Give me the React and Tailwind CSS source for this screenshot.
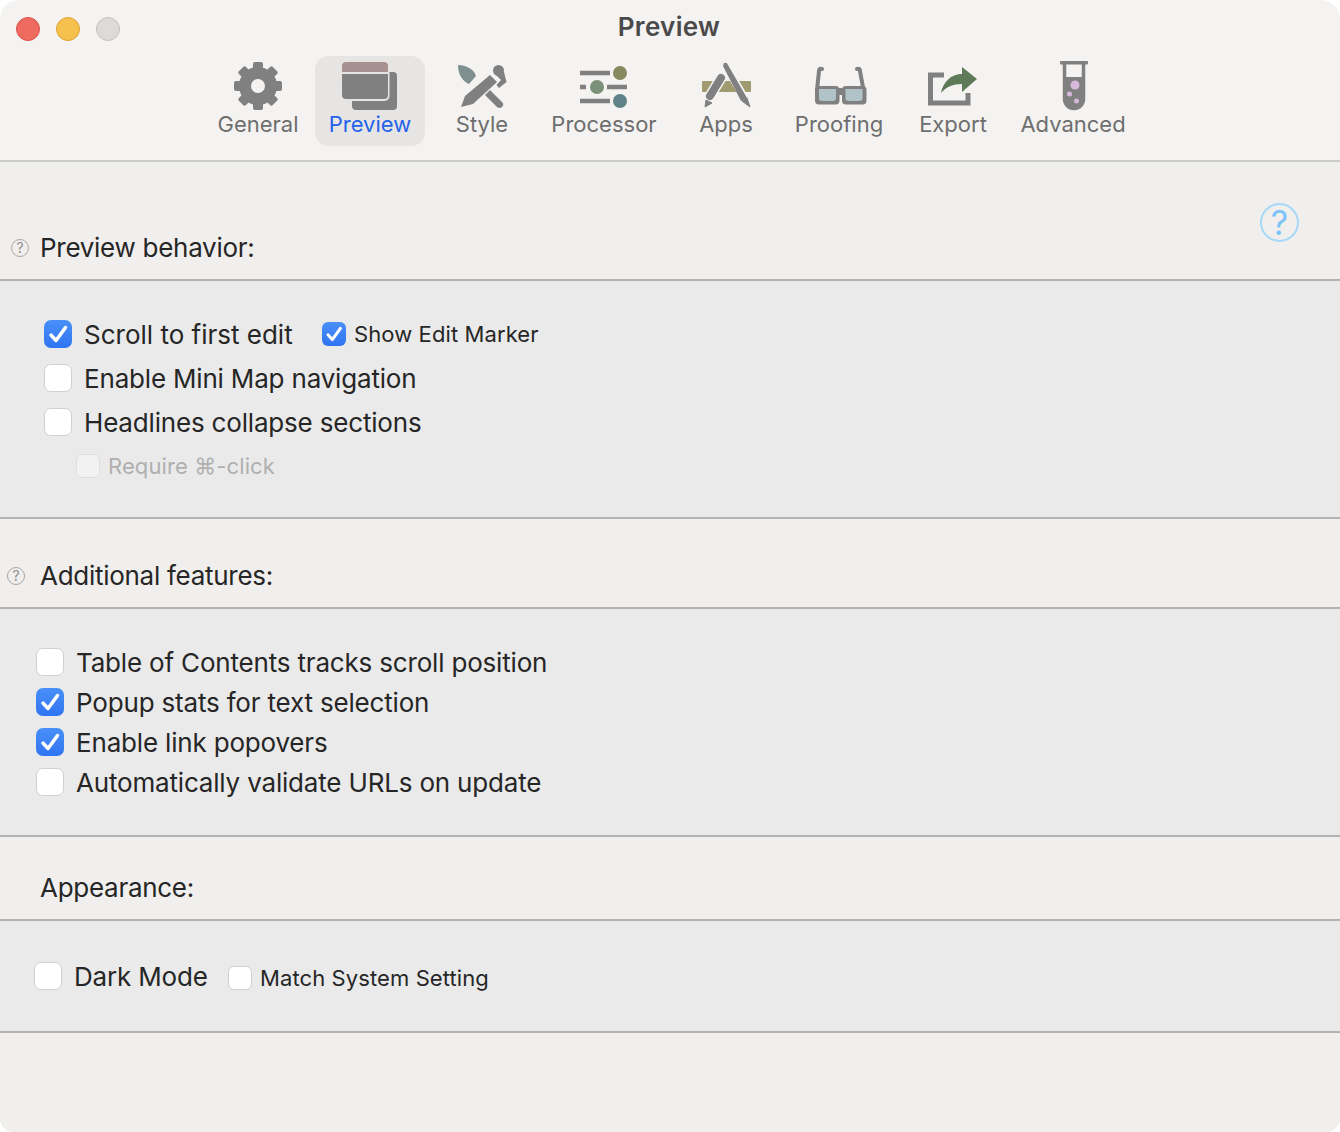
import React from 'react';

const GRAY = '#808080';
const BAR = '#f4f3f1';

const GearIcon = () => (
  <svg width="60" height="54" viewBox="228 58 60 54">
    {[0, 45, 90, 135, 180, 225, 270, 315].map((deg) => (
      <rect key={deg} x="253" y="62" width="10" height="10" rx="2" fill={GRAY} transform={`rotate(${deg} 258 86)`} />
    ))}
    <circle cx="258" cy="86" r="13" fill="none" stroke={GRAY} strokeWidth="12" />
  </svg>
);

const PreviewIcon = () => (
  <svg width="60" height="54" viewBox="340 58 60 54">
    <rect x="352" y="72" width="45" height="38" rx="4" fill={GRAY} />
    <rect x="340.5" y="60.5" width="49" height="40.5" rx="5" fill="#e6e5e3" />
    <path d="M342 72 V66 a4 4 0 0 1 4 -4 H384 a4 4 0 0 1 4 4 V72 Z" fill="#a89090" />
    <path d="M342 74 H388 V95 a4 4 0 0 1 -4 4 H346 a4 4 0 0 1 -4 -4 Z" fill={GRAY} />
  </svg>
);

const StyleIcon = () => (
  <svg width="60" height="54" viewBox="452 58 60 54">
    <path d="M458 65 C466 65 474 69 476 76 L469 84 C462 81 458 74 458 65 Z" fill="#7f8f90" />
    <path d="M485 95 L490 90 L503 103 Q504 107 500 108 Q497 108 496 106 Z" fill={GRAY} />
    <path d="M461 107 L465 96 L490 75 L497 82 L473 104 Z" fill={GRAY} />
    <circle cx="498.5" cy="70.5" r="5.5" fill={GRAY} />
    <path d="M494 70 L504 72 L506.5 82 L499 88 L496.5 85 L501 80 L497 76 Z" fill={GRAY} />
  </svg>
);

const ProcessorIcon = () => (
  <svg width="60" height="54" viewBox="574 58 60 54">
    <path d="M580 73 H610 M580 87 H586 M607 87 H627 M580 101 H610" stroke={GRAY} strokeWidth="4.5" />
    <circle cx="620" cy="73" r="7" fill="#868a60" />
    <circle cx="597" cy="87" r="7" fill="#7a9078" />
    <circle cx="620" cy="101" r="7" fill="#5f8288" />
  </svg>
);

const AppsIcon = () => (
  <svg width="60" height="54" viewBox="696 58 60 54">
    <rect x="702" y="81" width="49" height="11" rx="1" fill="#a09a6e" />
    <path d="M721 78 L710 96" stroke={BAR} strokeWidth="11" strokeLinecap="round" />
    <path d="M726 66 L745 99" stroke={BAR} strokeWidth="8" strokeLinecap="round" />
    <path d="M721 78 L710 96" stroke={GRAY} strokeWidth="8" strokeLinecap="round" />
    <path d="M705 107 L706 100 L712 103 Z" fill={GRAY} stroke={GRAY} strokeLinejoin="round" />
    <path d="M724 63 Q727 62 728 65 L747 98 L741 101 L723 66 Z" fill={GRAY} />
    <path d="M750 107 L742 101 L747 98 Z" fill={GRAY} stroke={GRAY} strokeLinejoin="round" />
  </svg>
);

const ProofingIcon = () => (
  <svg width="60" height="54" viewBox="809 58 60 54">
    <path d="M822 69 Q819 68 819 71 L817 90 M857 69 Q860 68 860 71 L863.5 90" fill="none" stroke={GRAY} strokeWidth="4" strokeLinecap="round" />
    <rect x="815" y="86" width="24.5" height="18.5" rx="4" fill={GRAY} />
    <rect x="842" y="86" width="24.5" height="18.5" rx="4" fill={GRAY} />
    <rect x="838" y="88" width="6" height="7" fill={GRAY} />
    <path d="M819 89 H836 V98 a3 3 0 0 1 -3 3 H822 a3 3 0 0 1 -3 -3 Z" fill="#afc3c9" />
    <path d="M845.5 89 H862.5 V98 a3 3 0 0 1 -3 3 H848.5 a3 3 0 0 1 -3 -3 Z" fill="#afc3c9" />
  </svg>
);

const ExportIcon = () => (
  <svg width="60" height="54" viewBox="923 58 60 54">
    <path d="M944 75 H930.5 V103 H968 V93" fill="none" stroke={GRAY} strokeWidth="5" />
    <path d="M962 67 L977 79 L962 92 V84 C953 84 946 87 941 93 C943 82 951 74 962 74 Z" fill="#5e7a58" />
  </svg>
);

const AdvancedIcon = () => (
  <svg width="60" height="54" viewBox="1043 58 60 54">
    <rect x="1060" y="61" width="28" height="3.5" rx="1" fill={GRAY} />
    <path d="M1064.5 64 V99 a9.5 9.5 0 0 0 19 0 V64" fill="none" stroke={GRAY} strokeWidth="3.5" />
    <path d="M1064.5 77 H1083.5 V99 a9.5 9.5 0 0 1 -19 0 Z" fill={GRAY} />
    <circle cx="1075" cy="85" r="4.5" fill="#d8b8dc" />
    <circle cx="1069.5" cy="94" r="2.5" fill="#d8b8dc" />
    <circle cx="1076.5" cy="101" r="2.5" fill="#d8b8dc" />
  </svg>
);

const tabs = [
  { label: 'General', width: 'w-[112px]', Icon: GearIcon },
  { label: 'Preview', width: 'w-[112px]', Icon: PreviewIcon, active: true },
  { label: 'Style', width: 'w-[112px]', Icon: StyleIcon },
  { label: 'Processor', width: 'w-[132px]', Icon: ProcessorIcon },
  { label: 'Apps', width: 'w-[112px]', Icon: AppsIcon },
  { label: 'Proofing', width: 'w-[114px]', Icon: ProofingIcon },
  { label: 'Export', width: 'w-[114px]', Icon: ExportIcon },
  { label: 'Advanced', width: 'w-[126px]', Icon: AdvancedIcon },
];

const Check = ({ checked, small, disabled }) => {
  const size = small ? 'w-6 h-6 rounded-[6px]' : 'w-7 h-7 rounded-[7px]';
  if (checked) {
    return (
      <span className={`${size} shrink-0 flex items-center justify-center bg-gradient-to-b from-[#4a90f8] to-[#2f74f2]`}>
        <svg width={small ? 24 : 28} height={small ? 24 : 28} viewBox="0 0 28 28">
          <path d="M7 15 L12 20.5 L21.5 7.5" fill="none" stroke="#fff" strokeWidth="3.5" strokeLinecap="round" strokeLinejoin="round" />
        </svg>
      </span>
    );
  }
  return (
    <span
      className={`${size} shrink-0 border ${disabled ? 'bg-[#f2f2f2] border-[#dedede]' : 'bg-white border-[#d0d0d0]'}`}
    ></span>
  );
};

const Label = ({ children }) => (
  <span className="text-[26px] tracking-[-0.18px] text-[#262626]">{children}</span>
);

const Row = ({ children, checked, height }) => (
  <div className={`flex items-center gap-3 ${height}`}>
    <Check checked={checked} />
    <Label>{children}</Label>
  </div>
);

const SmallCheck = ({ checked, children, disabled, className }) => (
  <div className={`flex items-center gap-2 ${className || ''}`}>
    <Check small checked={checked} disabled={disabled} />
    <span className={`text-[22px] tracking-[0.1px] ${disabled ? 'text-[#b0b0b0]' : 'text-[#262626]'}`}>{children}</span>
  </div>
);

const SmallHelp = () => (
  <span className="w-[18px] h-[18px] rounded-full border border-[#a8a8a8] flex items-center justify-center text-[14px] leading-none text-[#8c8c8c]">
    ?
  </span>
);

const SectionHeader = ({ title, height, help, helpLeft, bigHelp }) => (
  <div className={`flex items-end justify-between ${height} pb-[15px] border-b-2 border-[#b2b2b2] bg-[#f0efed]`}>
    <div className="flex items-center h-8">
      <div className={`w-10 flex items-center ${helpLeft}`}>{help && <SmallHelp />}</div>
      <span className="text-[26px] leading-8 tracking-[-0.28px] text-[#262626]">{title}</span>
    </div>
    {bigHelp && (
      <span className="self-start mt-[41px] mr-[41px] w-[39px] h-[39px] rounded-full border-2 border-[#a8d8f8] flex items-center justify-center text-[34px] leading-none text-[#7cc4f8]">
        ?
      </span>
    )}
  </div>
);

export default function App() {
  return (
    <div className="w-[1340px] h-[1132px] bg-white font-['Inter',sans-serif]">
      <div className="h-full flex flex-col rounded-t-[20px] rounded-b-[14px] overflow-hidden bg-[#f0efed]">
        {/* Toolbar */}
        <div className="h-[162px] shrink-0 bg-[#f4f3f1] border-b-2 border-[#cbcbc9]">
          <div className="h-14 grid grid-cols-[1fr_auto_1fr] items-center pt-[1px]">
            <div className="flex items-center gap-4 pl-4">
              <span className="w-6 h-6 rounded-full bg-[#ef6a5f] border border-[#d9534a]"></span>
              <span className="w-6 h-6 rounded-full bg-[#f6c04f] border border-[#dfa233]"></span>
              <span className="w-6 h-6 rounded-full bg-[#dcdbd9] border border-[#c2c1bf]"></span>
            </div>
            <div className="text-[26px] font-semibold tracking-[0.3px] text-[#4a4a4a] pb-[4px] -translate-x-px">Preview</div>
            <div></div>
          </div>
          <div className="flex pl-[202px]">
            {tabs.map(({ label, width, Icon, active }) => (
              <div key={label} className={`${width} flex justify-center`}>
                <div className={`w-full h-[90px] flex flex-col items-center pt-[2px] ${active ? 'mx-px rounded-[14px] bg-[#e6e5e3]' : ''}`}>
                  <Icon />
                  <span className={`-mt-[2px] text-[22px] leading-7 ${active ? 'text-[#2563eb]' : 'text-[#6e6e6e]'}`}>{label}</span>
                </div>
              </div>
            ))}
          </div>
        </div>

        {/* Preview behavior */}
        <SectionHeader title="Preview behavior:" height="h-[119px]" help helpLeft="pl-[11px]" bigHelp />
        <div className="h-[238px] pt-[31px] pl-[44px] bg-[#eaeaea] border-b-2 border-[#b2b2b2]">
          <div className="flex items-center h-11">
            <div className="flex items-center gap-3 w-[278px]">
              <Check checked />
              <span className="text-[26px] text-[#262626]">Scroll to first edit</span>
            </div>
            <SmallCheck checked>Show Edit Marker</SmallCheck>
          </div>
          <Row height="h-11">Enable Mini Map navigation</Row>
          <Row height="h-11">Headlines collapse sections</Row>
          <SmallCheck disabled className="h-11 pl-8">Require ⌘-click</SmallCheck>
        </div>

        {/* Additional features */}
        <SectionHeader title="Additional features:" height="h-[90px]" help helpLeft="pl-[7px]" />
        <div className="h-[228px] pt-[33px] pl-9 bg-[#eaeaea] border-b-2 border-[#b2b2b2]">
          <Row height="h-10">Table of Contents tracks scroll position</Row>
          <Row height="h-10" checked>Popup stats for text selection</Row>
          <Row height="h-10" checked>Enable link popovers</Row>
          <Row height="h-10">Automatically validate URLs on update</Row>
        </div>

        {/* Appearance */}
        <SectionHeader title="Appearance:" height="h-[84px]" />
        <div className="h-[112px] pt-[33px] pl-[34px] bg-[#eaeaea] border-b-2 border-[#b2b2b2]">
          <div className="flex items-center h-11">
            <div className="flex items-center gap-3 w-[194px]">
              <Check />
              <Label>Dark Mode</Label>
            </div>
            <SmallCheck className="mt-[4px]">Match System Setting</SmallCheck>
          </div>
        </div>
        <div className="flex-1 bg-[#f0efed]"></div>
      </div>
    </div>
  );
}
